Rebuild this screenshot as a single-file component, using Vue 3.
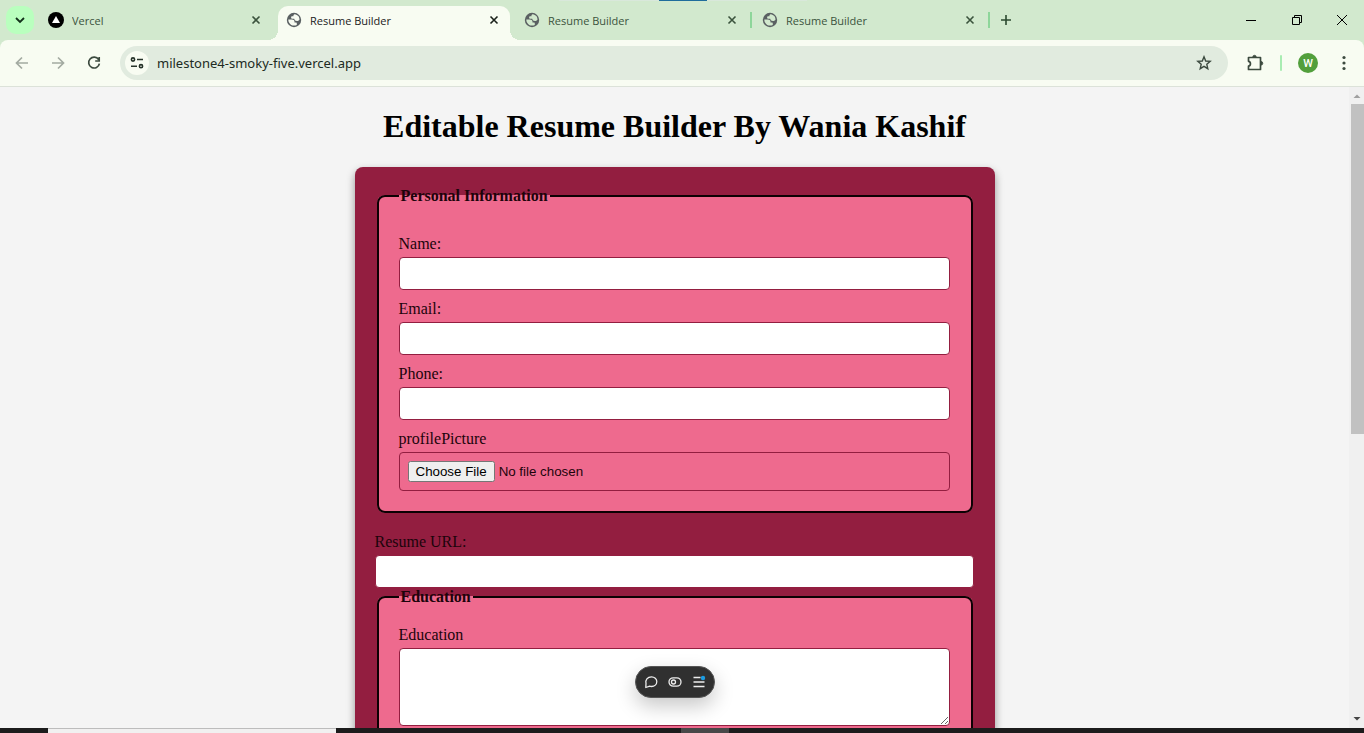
<script setup>
import { ref } from 'vue'

const tabs = [
  { title: 'Vercel', icon: 'vercel', active: false, divider: false },
  { title: 'Resume Builder', icon: 'globe', active: true, divider: false },
  { title: 'Resume Builder', icon: 'globe', active: false, divider: true },
  { title: 'Resume Builder', icon: 'globe', active: false, divider: true },
]

const contactFields = [
  { id: 'name', label: 'Name:', type: 'text' },
  { id: 'email', label: 'Email:', type: 'email' },
  { id: 'phone', label: 'Phone:', type: 'tel' },
]

const address = ref('milestone4-smoky-five.vercel.app')
</script>

<template>
  <div class="window">
    <div class="top-strip"><span></span></div>

    <header class="tab-strip">
      <button class="tab-search" type="button" aria-label="Search tabs">
        <svg width="10" height="10" viewBox="0 0 10 10"><path d="M1 3 5 7 9 3" fill="none" stroke="#12301a" stroke-width="1.8" /></svg>
      </button>
      <template v-for="(tab, i) in tabs" :key="i">
        <div class="tab" :class="{ active: tab.active }">
          <svg v-if="tab.icon === 'vercel'" class="favicon" viewBox="0 0 16 16">
            <circle cx="8" cy="8" r="8" fill="#000" />
            <path d="M8 4 12 11H4z" fill="#fff" />
          </svg>
          <svg v-else class="favicon" viewBox="0 0 16 16">
            <circle cx="8" cy="8" r="7.2" fill="#5a6062" />
            <path class="land" d="M8.600 2.300c-.9.4-1.200 1-1.200 1.900H6.300c-.8 0-1.200.4-1.200 1.200 0 .9.500 1.400 1.400 1.400h1.700c.4 1.500 1.200 2.200 2.700 2.200 1.100 0 1.900-.4 2.600-1.300.2-2.700-1.700-5-4.900-5.400z" />
            <path class="land" d="M2.300 7.600h3.500c1.700 0 2.700.8 2.700 2.200v.7h1.300c.7 0 1 .4 1 1v1.400c-1.700.9-3.800 1-5.600 0-1.900-1.100-2.900-3-2.900-5.300z" />
          </svg>
          <span class="tab-title">{{ tab.title }}</span>
          <button class="tab-close" type="button" aria-label="Close tab">
            <svg width="10" height="10" viewBox="0 0 10 10"><path d="m1.500 1.500 7 7m0-7-7 7" stroke="currentColor" stroke-width="1.600" /></svg>
          </button>
        </div>
        <span class="tab-gap" :class="{ divider: tab.divider }"></span>
      </template>
      <button class="new-tab" type="button" aria-label="New tab">
        <svg width="12" height="12" viewBox="0 0 12 12"><path d="M6 1v10M1 6h10" stroke="#2c4a30" stroke-width="1.600" /></svg>
      </button>
      <div class="window-controls">
        <button type="button" aria-label="Minimize">
          <svg width="12" height="12" viewBox="0 0 12 12"><path d="M1 6.500h10" stroke="#000" /></svg>
        </button>
        <button type="button" aria-label="Restore">
          <svg width="12" height="12" viewBox="0 0 12 12"><path d="M1.500 3.500h7v7h-7zM3.500 3.500v-2h7v7h-2" fill="none" stroke="#000" /></svg>
        </button>
        <button type="button" aria-label="Close window">
          <svg width="12" height="12" viewBox="0 0 12 12"><path d="m1 1 10 10M11 1 1 11" stroke="#000" /></svg>
        </button>
      </div>
    </header>

    <div class="toolbar-back">
      <nav class="toolbar">
        <button class="tool faded" type="button" aria-label="Back">
          <svg width="16" height="16" viewBox="0 0 16 16"><path d="M14 8H2.500M8 2.500 2.500 8 8 13.500" /></svg>
        </button>
        <button class="tool faded" type="button" aria-label="Forward">
          <svg width="16" height="16" viewBox="0 0 16 16"><path d="M2 8h11.500M8 2.500 13.500 8 8 13.500" /></svg>
        </button>
        <button class="tool" type="button" aria-label="Reload">
          <svg width="16" height="16" viewBox="0 0 16 16"><path d="M12.600 4.600A5.400 5.400 0 1 0 13.400 8.600M13.200 2v4H9.200" /></svg>
        </button>
        <div class="omnibox">
          <button class="site-info" type="button" aria-label="View site information">
            <svg width="16" height="16" viewBox="0 0 16 16" fill="none" stroke="#26332a" stroke-width="1.600"><circle cx="4" cy="4.500" r="1.600" /><path d="M8 4.500h6M2 11.200h6" /><circle cx="12" cy="11.200" r="1.600" /></svg>
          </button>
          <input v-model="address" class="address" type="text" aria-label="Address and search bar" />
          <button class="star" type="button" aria-label="Bookmark this tab">
            <svg width="16" height="16" viewBox="0 0 16 16"><path d="m8 1.800 1.700 4.200 4.500.4-3.400 2.900 1 4.400L8 11.400l-3.800 2.300 1-4.400L1.800 6.400l4.500-.4z" fill="none" stroke="#3c4a3f" stroke-width="1.400" /></svg>
          </button>
        </div>
        <div class="actions">
          <button class="tool" type="button" aria-label="Extensions">
            <svg width="18" height="18" viewBox="0 0 18 18"><path d="M2.500 3.500h12V15.500h-12v-3.300c2.600-.4 2.600-4.500 0-4.900z" stroke-linejoin="round" /><path d="M6.800 3a1.700 1.700 0 0 1 3.400 0zM15 7.500a1.700 1.700 0 0 1 0 3.600z" fill="#3c4a3f" stroke-width=".8" /></svg>
          </button>
          <span class="tool-divider"></span>
          <button class="avatar" type="button" aria-label="Profile">W</button>
          <button class="tool menu" type="button" aria-label="Menu">
            <svg width="16" height="16" viewBox="0 0 16 16"><g fill="#3c4a3f" stroke="none"><circle cx="8" cy="2.500" r="1.600" /><circle cx="8" cy="8" r="1.600" /><circle cx="8" cy="13.500" r="1.600" /></g></svg>
          </button>
        </div>
      </nav>
    </div>

    <div class="viewport">
      <main class="page">
        <h1>Editable Resume Builder By Wania Kashif</h1>
        <form class="card" @submit.prevent>
          <fieldset class="personal">
            <legend>Personal Information</legend>
            <div v-for="field in contactFields" :key="field.id" class="field">
              <label :for="field.id">{{ field.label }}</label>
              <input :id="field.id" :type="field.type" />
            </div>
            <div class="field">
              <label for="picture">profilePicture</label>
              <input id="picture" type="file" />
            </div>
          </fieldset>
          <div class="url field">
            <label for="url">Resume URL:</label>
            <input id="url" type="text" />
          </div>
          <fieldset>
            <legend>Education</legend>
            <div class="field">
              <label for="education">Education</label>
              <textarea id="education"></textarea>
            </div>
          </fieldset>
        </form>

        <div class="floating-bar">
          <button type="button" aria-label="Comment">
            <svg width="14" height="14" viewBox="0 0 14 14"><path d="M1.800 12.500 2 8.500C1 5 3.500 1.800 7.500 1.800c3 0 5.300 2 5.300 4.700 0 3-2.300 5-5.300 5-.6 0-1.200-.1-1.800-.3z" stroke-linejoin="round" /></svg>
          </button>
          <button type="button" aria-label="Draft mode">
            <svg width="14" height="14" viewBox="0 0 14 14"><rect x="1" y="2.800" width="12" height="8.400" rx="4.200" /><circle cx="5.500" cy="7" r="2" /></svg>
          </button>
          <button type="button" aria-label="Toolbar menu">
            <svg width="14" height="14" viewBox="0 0 14 14"><path d="M1.500 2.500h7M1.500 7h11M1.500 11.500h11" /><circle cx="11" cy="3" r="2.200" fill="#1c9be0" stroke="none" /></svg>
          </button>
        </div>
      </main>
      <div class="scrollbar">
        <svg width="15" height="17" viewBox="0 0 15 17"><path d="M4.500 11 8 7.500 11.500 11z" fill="#a0a0a0" /></svg>
        <span class="thumb"></span>
        <svg width="15" height="17" viewBox="0 0 15 17"><path d="M4.500 6 8 9.500 11.500 6z" fill="#454545" /></svg>
      </div>
    </div>

    <footer class="taskbar">
      <span class="search-box"></span>
      <span class="running"></span>
    </footer>
  </div>
</template>

<style>
body {
  margin: 0;
}
</style>

<style scoped>
.window {
  position: relative;
  display: flex;
  flex-direction: column;
  height: 100vh;
  overflow: hidden;
  background: #f4f4f4;
}

button {
  display: flex;
  align-items: center;
  justify-content: center;
  padding: 0;
  border: 0;
  background: none;
  flex-shrink: 0;
}

.top-strip {
  position: absolute;
  z-index: 1;
  top: 0;
  left: 41%;
  width: 248px;
  height: 1px;
  background: #d9e8db;
}

.top-strip span {
  display: block;
  width: 48px;
  height: 1px;
  margin: 0 auto;
  background: #1f6d9c;
}

.tab-strip {
  display: flex;
  align-items: flex-end;
  height: 40px;
  background: #d2e9ce;
  font-family: "Open Sans", "Noto Sans", sans-serif;
  flex-shrink: 0;
}

.tab-search {
  width: 28px;
  height: 28px;
  margin: 0 6px 6px;
  border-radius: 10px;
  background: #b9ffbe;
}

.tab {
  position: relative;
  display: flex;
  align-items: center;
  gap: 8px;
  flex: 0 1 232px;
  box-sizing: border-box;
  height: 34px;
  min-width: 0;
  padding: 0 8px 6px;
  color: #3b533d;
}

.tab.active {
  border-radius: 10px 10px 0 0;
  background: #f8fcf2;
  color: #1a211b;
}

.tab.active::before,
.tab.active::after {
  content: "";
  position: absolute;
  bottom: 0;
  width: 10px;
  height: 10px;
}

.tab.active::before {
  right: 100%;
  background: radial-gradient(circle at 0 0, transparent 10px, #f8fcf2 10px);
}

.tab.active::after {
  left: 100%;
  background: radial-gradient(circle at 100% 0, transparent 10px, #f8fcf2 10px);
}

.favicon {
  width: 16px;
  height: 16px;
  flex-shrink: 0;
}

.land {
  fill: #d2e9ce;
}

.active .land {
  fill: #f8fcf2;
}

.tab-title {
  flex: 1;
  padding-top: 2px;
  font-size: 11px;
  line-height: 18px;
  white-space: nowrap;
  overflow: hidden;
}

.tab-close {
  width: 16px;
  height: 16px;
  color: inherit;
}

.tab-gap {
  flex: 0 0 6px;
  height: 40px;
}

.tab-gap.divider {
  box-sizing: border-box;
  height: 16px;
  margin-bottom: 12px;
  border-left: 2px solid #8ed69a;
  border-right: 2px solid transparent;
  margin-left: 2px;
  margin-right: -2px;
}

.new-tab {
  width: 28px;
  height: 28px;
  margin-bottom: 6px;
}

.window-controls {
  display: flex;
  margin-left: auto;
}

.window-controls button {
  width: 46px;
  height: 40px;
}

.toolbar-back {
  background: #d2e9ce;
  flex-shrink: 0;
}

.window-controls button:last-child {
  width: 44px;
}

.toolbar {
  display: flex;
  align-items: center;
  height: 46px;
  padding-left: 4px;
  border-bottom: 1px solid #dce2d9;
  border-radius: 8px 8px 0 0;
  background: #f8fcf2;
}

.tool {
  width: 36px;
  height: 34px;
}

.tool svg {
  fill: none;
  stroke: #3c4a3f;
  stroke-width: 1.700;
}

.tool.faded svg {
  stroke: #a3aba1;
}

.omnibox {
  display: flex;
  align-items: center;
  flex: 1;
  height: 34px;
  margin-left: 8px;
  border-radius: 17px;
  background: #e1ebdf;
}

.site-info {
  width: 24px;
  height: 24px;
  margin-left: 5px;
  border-radius: 12px;
  background: #f8fcf2;
}

.address {
  flex: 1;
  min-width: 0;
  height: 24px;
  padding: 0 8px;
  border: 0;
  outline: 0;
  background: transparent;
  color: #202a22;
  font-family: "Noto Sans", "Open Sans", sans-serif;
  font-size: 13px;
}

.star {
  width: 24px;
  height: 24px;
  margin-right: 12px;
}

.actions {
  display: flex;
  align-items: center;
  width: 136px;
}

.actions .tool:first-child {
  margin-left: 9px;
}

.tool-divider {
  width: 2px;
  height: 16px;
  margin-left: 7px;
  border-radius: 1px;
  background: #a9ecb2;
}

.avatar {
  width: 20px;
  height: 20px;
  margin-left: 16px;
  border-radius: 50%;
  background: #529f3c;
  color: #fff;
  font: 500 11px Roboto, sans-serif;
}

.tool.menu {
  margin-left: 8px;
}

.viewport {
  display: flex;
  flex: 1;
  min-height: 0;
}

.page {
  position: relative;
  flex: 1;
  min-width: 0;
  overflow: hidden;
  font-family: "Liberation Serif", "Times New Roman", serif;
  font-size: 16px;
  line-height: 18px;
  color: #000;
}

h1 {
  margin: 21px 0 22px;
  font-size: 32px;
  line-height: 37px;
  text-align: center;
}

.card {
  box-sizing: border-box;
  max-width: 640px;
  margin: 0 auto;
  padding: 20px;
  border-radius: 8px;
  background: #931e40;
  box-shadow: 0 4px 8px rgba(0, 0, 0, 0.4);
  color: #1c040b;
}

fieldset {
  margin: 0 2px;
  padding: 20px;
  border: 2px solid #0c0103;
  border-radius: 8px;
  background: #ee6a8e;
}

.personal {
  padding-top: 30px;
}

legend {
  padding: 0 2px;
  font-weight: bold;
}

.field {
  display: flex;
  flex-direction: column;
  gap: 4px;
}

.field + .field {
  margin-top: 10px;
}

.url {
  margin-top: 20px;
}

.field input,
.field textarea {
  box-sizing: border-box;
  width: calc(100% - 1px);
  padding: 8px;
  border: 1px solid #931e40;
  border-radius: 4px;
  font-family: "Liberation Sans", Arial, sans-serif;
}

.field input {
  height: 33px;
  background: #fff;
}

.field input[type="file"] {
  height: 39px;
  background: transparent;
  color: #1c040b;
}

.field textarea {
  height: 78px;
  resize: vertical;
}

.floating-bar {
  position: absolute;
  bottom: 30px;
  left: 50%;
  display: flex;
  align-items: center;
  justify-content: center;
  box-sizing: border-box;
  width: 80px;
  height: 32px;
  margin-left: -40px;
  border: 1px solid #555;
  border-radius: 16px;
  background: #303030;
  box-shadow: 0 8px 20px rgba(0, 0, 0, 0.22);
}

.floating-bar button {
  width: 24px;
  height: 24px;
}

.floating-bar svg {
  fill: none;
  stroke: #ededed;
  stroke-width: 1.300;
}

.scrollbar {
  display: flex;
  flex-direction: column;
  width: 15px;
  background: #f0f0f0;
}

.thumb {
  height: 330px;
  margin: 0 0 auto 2px;
  background: #c1c1c1;
}

.taskbar {
  display: flex;
  height: 5px;
  padding-left: 48px;
  background: #1c1c1c;
  flex-shrink: 0;
}

.search-box {
  box-sizing: border-box;
  width: 288px;
  border-top: 1px solid #bcbcbc;
  background: #f1f0f0;
}

.running {
  width: 48px;
  margin-left: 345px;
  background: #484848;
}
</style>
